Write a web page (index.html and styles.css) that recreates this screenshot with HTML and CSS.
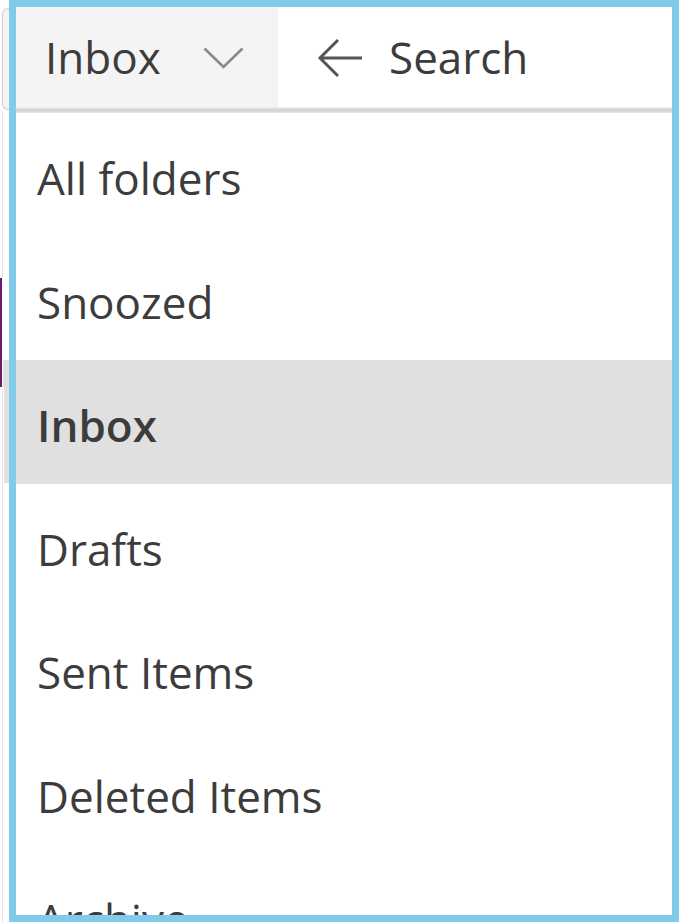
FILE: index.html
```html
<!DOCTYPE html>
<html>
<head>
<meta charset="utf-8">
<link rel="stylesheet" href="styles.css">
</head>
<body>
<div class="page">
  <div class="strip">
    <div class="strip-top"></div>
    <div class="strip-box"></div>
    <div class="strip-rest">
      <div class="seg seg-a"></div>
      <div class="seg seg-b"><span class="purple"></span></div>
      <div class="seg seg-c"><span class="purple"></span><span class="grey"></span></div>
      <div class="seg seg-d"><span class="grey"></span></div>
      <div class="seg seg-e"></div>
    </div>
  </div>
  <div class="frame">
    <div class="header">
      <div class="folder-btn">
        <span class="folder-label">Inbox</span>
        <svg class="chevron" width="41" height="22" viewBox="0 0 41 22"><path d="M1.5 1.5 L20.5 20 L39.5 1.5" fill="none" stroke="#8a8a8a" stroke-width="2.6"/></svg>
      </div>
      <div class="search">
        <svg class="arrow" width="46" height="40" viewBox="0 0 46 40"><path d="M21 2 L3 20 L21 38 M3 20 L45 20" fill="none" stroke="#555" stroke-width="3"/></svg>
        <span class="search-label">Search</span>
      </div>
    </div>
    <div class="divider"></div>
    <ul class="menu">
      <li class="item">All folders</li>
      <li class="item">Snoozed</li>
      <li class="item selected">Inbox</li>
      <li class="item">Drafts</li>
      <li class="item">Sent Items</li>
      <li class="item">Deleted Items</li>
      <li class="item">Archive</li>
    </ul>
  </div>
</div>
</body>
</html>
```

FILE: styles.css
```css
html, body {
  margin: 0;
  padding: 0;
  background: #ffffff;
}

.page {
  display: flex;
  width: 679px;
  height: 922px;
  overflow: hidden;
  font-family: "Open Sans", "Noto Sans", sans-serif;
  color: #3c3c3c;
}

.strip {
  width: 9px;
  flex: none;
  display: flex;
  flex-direction: column;
}

.strip-top {
  height: 8px;
}

.strip-box {
  height: 100px;
  margin-left: 2px;
  border: 1px solid #cfcfcf;
  border-right: none;
  border-radius: 6px 0 0 6px;
  background: #f4f4f4;
}

.strip-rest {
  flex: 1;
  display: flex;
  flex-direction: column;
}

.seg {
  display: flex;
}

.seg-a { height: 168px; margin-left: 2px; border-left: 1px solid #e4e4e4; }
.seg-b { height: 82px; }
.seg-c { height: 27px; }
.seg-d { height: 96px; margin-left: 2px; border-left: 1px solid #e4e4e4; }
.seg-e { flex: 1; margin-left: 2px; border-left: 1px solid #e4e4e4; }

.purple {
  width: 2px;
  background: #6a1b6d;
}

.grey {
  flex: 1;
  background: #e0e0e0;
  margin-left: 1px;
}

.frame {
  flex: none;
  width: 670px;
  height: 922px;
  box-sizing: border-box;
  border: 7px solid #80cbea;
  overflow: hidden;
  display: flex;
  flex-direction: column;
}

.header {
  height: 100px;
  flex: none;
  display: flex;
}

.folder-btn {
  width: 262px;
  background: #f4f4f4;
  display: flex;
  align-items: center;
  box-sizing: border-box;
  padding-left: 29px;
}

.folder-label {
  font-size: 44px;
  line-height: 100px;
  width: 158px;
}

.chevron {
  margin-top: 2px;
}

.search {
  flex: 1;
  display: flex;
  align-items: center;
  padding-left: 39px;
}

.arrow {
  margin-top: 2px;
}

.search-label {
  font-size: 44px;
  margin-left: 26px;
  line-height: 100px;
}

.divider {
  height: 6px;
  flex: none;
  background: linear-gradient(#f2f2f2, #cfcfcf 50%, #e6e6e6);
}

.menu {
  list-style: none;
  margin: 0;
  padding: 0;
}

.item {
  height: 115.5px;
  padding-top: 8px;
  line-height: 115.5px;
  padding-left: 21px;
  font-size: 44px;
  color: #3c3c3c;
  white-space: nowrap;
}

.item.selected {
  background: #e0e0e0;
  font-weight: 600;
}
```
